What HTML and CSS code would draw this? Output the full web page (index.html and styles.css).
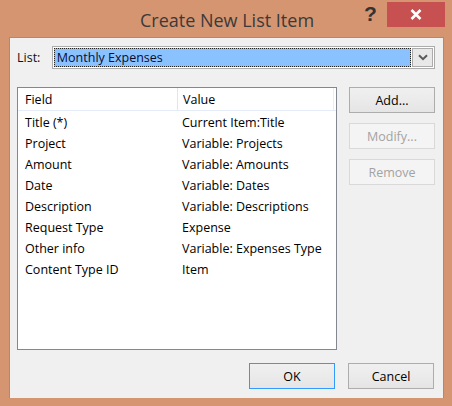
FILE: index.html
```html
<!DOCTYPE html>
<html>
<head>
<meta charset="utf-8">
<link rel="stylesheet" href="styles.css">
</head>
<body>
<div class="window">
  <div class="titlebar">
    <div class="title">Create New List Item</div>
    <div class="help">?</div>
    <div class="close">
      <svg width="12" height="11" viewBox="0 0 12 11"><path d="M1.5 1 L10.5 10 M10.5 1 L1.5 10" stroke="#fff" stroke-width="2.6" fill="none"/></svg>
    </div>
  </div>
  <div class="client">
    <div class="list-row">
      <span class="label">List:</span>
      <div class="combo">
        <div class="combo-value"><span>Monthly Expenses</span></div>
        <div class="combo-btn">
          <svg width="10" height="7" viewBox="0 0 10 7"><path d="M1 1.2 L5 5.2 L9 1.2" stroke="#5a5a5a" stroke-width="2" fill="none"/></svg>
        </div>
      </div>
    </div>
    <div class="main">
      <div class="listbox">
        <div class="row head">
          <div class="c1">Field</div>
          <div class="c2">Value</div>
        </div>
        <div class="row"><div class="c1">Title (*)</div><div class="c2">Current Item:Title</div></div>
        <div class="row"><div class="c1">Project</div><div class="c2">Variable: Projects</div></div>
        <div class="row"><div class="c1">Amount</div><div class="c2">Variable: Amounts</div></div>
        <div class="row"><div class="c1">Date</div><div class="c2">Variable: Dates</div></div>
        <div class="row"><div class="c1">Description</div><div class="c2">Variable: Descriptions</div></div>
        <div class="row"><div class="c1">Request Type</div><div class="c2">Expense</div></div>
        <div class="row"><div class="c1">Other info</div><div class="c2">Variable: Expenses Type</div></div>
        <div class="row"><div class="c1">Content Type ID</div><div class="c2">Item</div></div>
      </div>
      <div class="side">
        <div class="btn">Add...</div>
        <div class="btn disabled">Modify...</div>
        <div class="btn disabled">Remove</div>
      </div>
    </div>
    <div class="footer">
      <div class="btn default">OK</div>
      <div class="btn">Cancel</div>
    </div>
  </div>
</div>
</body>
</html>
```

FILE: styles.css
```css
html, body {
  margin: 0;
  padding: 0;
}
body {
  width: 452px;
  height: 406px;
  background: #d59571;
  font-family: "Open Sans", "Noto Sans", sans-serif;
  font-size: 12.5px;
  color: #000;
  overflow: hidden;
}
.window {
  width: 452px;
  height: 406px;
  box-sizing: border-box;
  position: relative;
}
.titlebar {
  height: 37px;
  position: relative;
}
.title {
  text-align: center;
  font-size: 18px;
  color: #3a3a3a;
  line-height: 40px;
  padding-left: 2px;
}
.help {
  position: absolute;
  left: 364px;
  top: 1px;
  font-family: "Liberation Sans", sans-serif;
  font-weight: bold;
  font-size: 21px;
  color: #333;
  line-height: 26px;
}
.close {
  position: absolute;
  left: 387px;
  top: 2px;
  width: 58px;
  height: 25px;
  background: #c75050;
  display: flex;
  align-items: center;
  justify-content: center;
}
.client {
  margin-left: 9px;
  width: 435px;
  height: 361px;
  box-sizing: border-box;
  border: 1px solid #c08462;
  border-bottom: none;
  background: #f0f0f0;
  padding: 8px 8px 0 7px;
  display: flex;
  flex-direction: column;
}
.list-row {
  display: flex;
  align-items: center;
  height: 23px;
}
.label {
  width: 35px;
  color: #111;
}
.combo {
  width: 385px;
  height: 23px;
  box-sizing: border-box;
  border: 1px solid #acacac;
  background: #fff;
  display: flex;
  padding: 1px;
}
.combo-value {
  flex: 1;
  background: #8ac2ff;
  border: 1px dotted #222;
  display: flex;
  align-items: center;
  padding-left: 2px;
  margin-right: 1px;
  color: #0b0b30;
}
.combo-btn {
  width: 21px;
  box-sizing: border-box;
  border: 1px solid #acacac;
  background: #e8e8e8;
  display: flex;
  align-items: center;
  justify-content: center;
}
.main {
  display: flex;
  margin-top: 18px;
  gap: 12px;
}
.listbox {
  width: 321px;
  height: 263px;
  box-sizing: border-box;
  border: 1px solid #828790;
  background: #fff;
}
.row {
  display: flex;
  height: 21px;
  box-sizing: border-box;
  align-items: center;
  padding-top: 1px;
}
.row.head {
  height: 23px;
  padding-top: 0;
  border-bottom: 1px solid #e3ecf7;
  align-items: stretch;
}
.c1 {
  width: 159px;
  padding-left: 7px;
  box-sizing: border-box;
}
.c2 {
  padding-left: 5px;
}
.head .c1, .head .c2 {
  display: flex;
  align-items: center;
}
.head .c1 {
  width: 160px;
  border-right: 1px solid #e5e5e5;
}
.head .c2 {
  width: 156px;
  box-sizing: border-box;
  border-right: 1px solid #e5eef9;
}
.side {
  display: flex;
  flex-direction: column;
  gap: 10px;
}
.btn {
  width: 86px;
  height: 26px;
  box-sizing: border-box;
  border: 1px solid #adadad;
  background: linear-gradient(#f0f0f0, #e5e5e5);
  display: flex;
  align-items: center;
  justify-content: center;
  color: #000;
}
.btn.disabled {
  border-color: #d9d9d9;
  background: #f4f4f4;
  color: #a3a3a3;
}
.btn.default {
  border-color: #3399ff;
}
.footer {
  display: flex;
  justify-content: flex-end;
  gap: 13px;
  margin-top: 13px;
  padding-right: 1px;
}
```
